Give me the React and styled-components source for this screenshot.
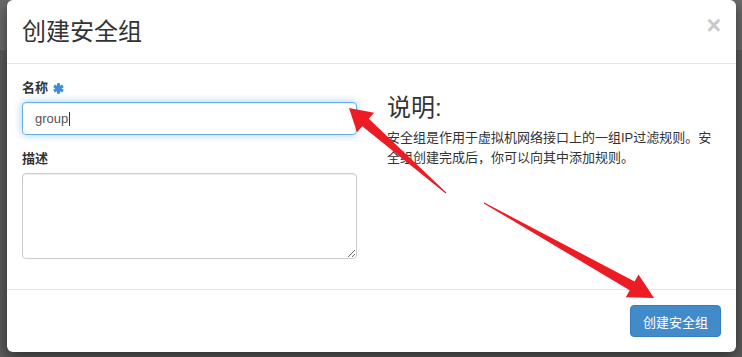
import React from "react";
import styled, { createGlobalStyle } from "styled-components";

const GlobalStyle = createGlobalStyle`
  html, body {
    margin: 0;
    padding: 0;
  }
  body {
    font-family: "Liberation Sans", "Noto Sans CJK SC", sans-serif;
    color: #333;
  }
  * {
    box-sizing: border-box;
  }
`;

// arrow shape: thin tail widening to a neck, then a triangular head
function arrowPoints(tail, tip, headLen, headHalf, neckHalf, tailHalf) {
  const dx = tip[0] - tail[0];
  const dy = tip[1] - tail[1];
  const len = Math.hypot(dx, dy);
  const ux = dx / len;
  const uy = dy / len;
  const nx = -uy;
  const ny = ux;
  const bx = tip[0] - ux * headLen;
  const by = tip[1] - uy * headLen;
  const pts = [
    [tail[0] + nx * tailHalf, tail[1] + ny * tailHalf],
    [bx + nx * neckHalf, by + ny * neckHalf],
    [bx + nx * headHalf, by + ny * headHalf],
    tip,
    [bx - nx * headHalf, by - ny * headHalf],
    [bx - nx * neckHalf, by - ny * neckHalf],
    [tail[0] - nx * tailHalf, tail[1] - ny * tailHalf],
  ];
  return pts.map((p) => p.map((v) => v.toFixed(1)).join(",")).join(" ");
}

const arrows = [
  { tail: [446, 193], tip: [349, 108], head: 22 },
  { tail: [484, 203], tip: [654, 298], head: 25 },
];

export default function App() {
  return (
    <React.Fragment>
      <GlobalStyle />
      <Backdrop>
        <Modal>
          <Header>
            <Title>创建安全组</Title>
            <Close>×</Close>
          </Header>

          <Body>
            <FormColumn>
              <Label>
                名称
                <Required viewBox="0 0 10 10">
                  <path d="M5 0.3V9.7M0.9 2.65L9.1 7.35M0.9 7.35L9.1 2.65" />
                </Required>
              </Label>
              <InputBox>
                group
                <Caret />
              </InputBox>
              <Label>描述</Label>
              <TextArea />
            </FormColumn>

            <HelpColumn>
              <HelpTitle>说明:</HelpTitle>
              <HelpText>
                安全组是作用于虚拟机网络接口上的一组IP过滤规则。安全组创建完成后，你可以向其中添加规则。
              </HelpText>
            </HelpColumn>
          </Body>

          <Footer>
            <PrimaryButton>创建安全组</PrimaryButton>
          </Footer>
        </Modal>

        <Annotations viewBox="0 0 742 357">
          {arrows.map((a, i) => (
            <polygon
              key={i}
              points={arrowPoints(a.tail, a.tip, a.head, 13, 5, 0.5)}
            />
          ))}
        </Annotations>
      </Backdrop>
    </React.Fragment>
  );
}

const Backdrop = styled.div`
  position: relative;
  width: 742px;
  height: 357px;
  overflow: hidden;
  padding: 0 6px 5px 7px;
  background: linear-gradient(#6b6b6b 0 50px, #5c5c5c 50px);
`;

const Modal = styled.div`
  width: 729px;
  height: 352px;
  display: flex;
  flex-direction: column;
  background: #fff;
  border-radius: 6px;
  box-shadow: 0 5px 15px rgba(0, 0, 0, 0.5);
`;

const Header = styled.div`
  display: flex;
  align-items: flex-start;
  justify-content: space-between;
  padding: 15px;
  border-bottom: 1px solid #e5e5e5;
`;

const Title = styled.h4`
  margin: 0;
  font-size: 24px;
  line-height: 33px;
  font-weight: normal;
  color: #333;
`;

const Close = styled.span`
  margin-top: -2px;
  font-family: "Liberation Sans", sans-serif;
  font-size: 25px;
  line-height: 1;
  font-weight: bold;
  color: #c8c8c8;
  cursor: pointer;
`;

const Body = styled.div`
  flex: 1;
  padding: 15px;
  display: grid;
  grid-template-columns: 335px 1fr;
  column-gap: 30px;
`;

const FormColumn = styled.div`
  display: flex;
  flex-direction: column;
`;

const Label = styled.label`
  display: flex;
  align-items: center;
  gap: 5px;
  font-size: 13px;
  line-height: 18px;
  font-weight: bold;
  margin-bottom: 5px;
`;

const Required = styled.svg`
  width: 11px;
  height: 11px;
  stroke: #3f8fd6;
  stroke-width: 2.8;
  fill: none;
`;

const InputBox = styled.div`
  display: flex;
  align-items: center;
  height: 33px;
  padding: 0 12px;
  margin-bottom: 15px;
  font-size: 13px;
  color: #555;
  border: 1px solid #66afe9;
  border-radius: 4px;
  box-shadow: inset 0 1px 1px rgba(0, 0, 0, 0.075),
    0 0 8px rgba(102, 175, 233, 0.6);
`;

const Caret = styled.span`
  width: 1px;
  height: 14px;
  margin-left: 1px;
  background: #333;
`;

const TextArea = styled.textarea`
  height: 86px;
  margin: 0 0 15px;
  padding: 6px 12px;
  font: inherit;
  font-size: 13px;
  border: 1px solid #ccc;
  border-radius: 4px;
  box-shadow: inset 0 1px 1px rgba(0, 0, 0, 0.075);
  resize: vertical;
  outline: none;
`;

const HelpColumn = styled.div`
  display: flex;
  flex-direction: column;
`;

const HelpTitle = styled.h3`
  margin: 16px 0 7px;
  font-size: 24px;
  line-height: 26px;
  font-weight: normal;
`;

const HelpText = styled.p`
  margin: 0;
  font-size: 13px;
  line-height: 20px;
`;

const Footer = styled.div`
  display: flex;
  justify-content: flex-end;
  padding: 15px;
  border-top: 1px solid #e5e5e5;
`;

const PrimaryButton = styled.button`
  height: 32px;
  padding: 0 12px;
  font-family: inherit;
  font-size: 13px;
  color: #fff;
  background: #428bca;
  border: 1px solid #357ebd;
  border-radius: 4px;
  cursor: pointer;
`;

const Annotations = styled.svg`
  position: absolute;
  inset: 0;
  width: 742px;
  height: 357px;
  pointer-events: none;
  fill: #ed1c24;
`;
